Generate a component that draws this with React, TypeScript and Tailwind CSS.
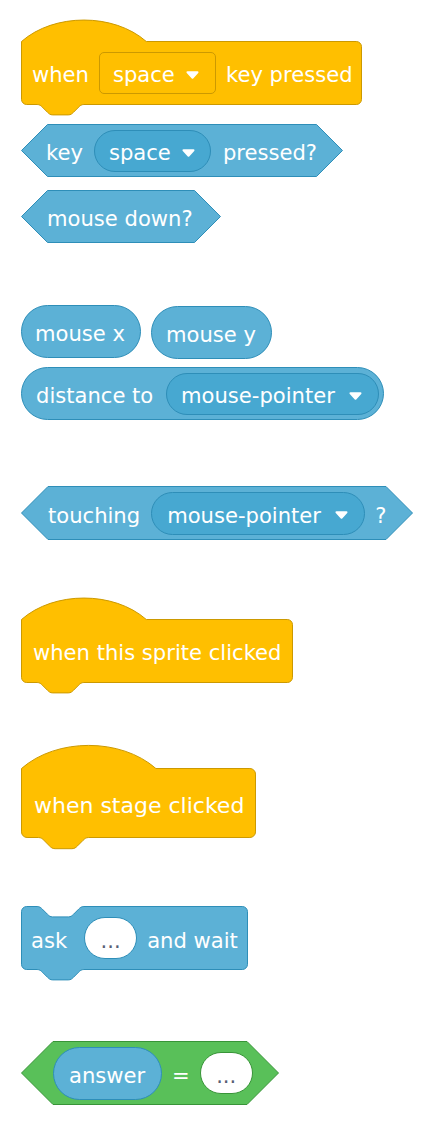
import type { ReactNode } from 'react'

const EVENTS = { fill: '#FFBF00', stroke: '#CC9900' }
const SENSING = { fill: '#5CB1D6', stroke: '#2E8EB8' }
const OPERATORS = { fill: '#59C059', stroke: '#389438' }

// bottom edge with the notch, drawn right to left
function bottomEdge(y: number, s: number) {
  return `L ${48 * s} ${y} c ${-2 * s} 0 ${-3 * s} ${s} ${-4 * s} ${2 * s} l ${-4 * s} ${4 * s} c ${-s} ${s} ${-2 * s} ${2 * s} ${-4 * s} ${2 * s} h ${-12 * s} c ${-2 * s} 0 ${-3 * s} ${-s} ${-4 * s} ${-2 * s} l ${-4 * s} ${-4 * s} c ${-s} ${-s} ${-2 * s} ${-2 * s} ${-4 * s} ${-2 * s} L ${4 * s} ${y}`
}

function hatPath(w: number, top: number, bottom: number, s: number) {
  const c = 4 * s
  return `M 0 ${top} c ${25 * s} ${-22 * s} ${71 * s} ${-22 * s} ${96 * s} 0 L ${w - c} ${top} a ${c} ${c} 0 0 1 ${c} ${c} L ${w} ${bottom - c} a ${c} ${c} 0 0 1 ${-c} ${c} ${bottomEdge(bottom, s)} a ${c} ${c} 0 0 1 ${-c} ${-c} Z`
}

function stackPath(w: number, h: number, s: number) {
  const c = 4 * s
  return `M 0 ${c} a ${c} ${c} 0 0 1 ${c} ${-c} L ${12 * s} 0 c ${2 * s} 0 ${3 * s} ${s} ${4 * s} ${2 * s} l ${4 * s} ${4 * s} c ${s} ${s} ${2 * s} ${2 * s} ${4 * s} ${2 * s} h ${12 * s} c ${2 * s} 0 ${3 * s} ${-s} ${4 * s} ${-2 * s} l ${4 * s} ${-4 * s} c ${s} ${-s} ${2 * s} ${-2 * s} ${4 * s} ${-2 * s} L ${w - c} 0 a ${c} ${c} 0 0 1 ${c} ${c} L ${w} ${h - c} a ${c} ${c} 0 0 1 ${-c} ${c} ${bottomEdge(h, s)} a ${c} ${c} 0 0 1 ${-c} ${-c} Z`
}

function boolPath(w: number, h: number) {
  const r = h / 2
  return `M ${r} 0 L ${w - r} 0 L ${w} ${r} L ${w - r} ${h} L ${r} ${h} L 0 ${r} Z`
}

// block outline, painted behind the block's content
function Shape({ d, fill, stroke }: { d: string; fill: string; stroke: string }) {
  return (
    <svg className="absolute inset-0 h-full w-full overflow-visible" aria-hidden="true">
      <path d={d} transform="translate(0.5 0.5)" fill={fill} stroke={stroke} strokeWidth={1} />
    </svg>
  )
}

function Label({ children }: { children: ReactNode }) {
  return <span className="whitespace-nowrap pt-[5px]">{children}</span>
}

function Arrow() {
  return (
    <svg width="13" height="8" viewBox="0 0 13 8" className="mt-[4px] shrink-0">
      <path d="M1.5 1.3 H11.5 L6.5 6.7 Z" fill="#fff" stroke="#fff" strokeWidth={2} strokeLinejoin="round" />
    </svg>
  )
}

function Dropdown({ label, className }: { label: string; className: string }) {
  return (
    <div
      className={`flex h-[42px] shrink-0 items-center justify-between rounded-full border border-[#2E8EB8] bg-[#47A8D1] ${className}`}
    >
      <Label>{label}</Label>
      <Arrow />
    </div>
  )
}

function WhiteInput({ className }: { className: string }) {
  return (
    <div
      className={`flex h-[42px] shrink-0 items-center justify-center rounded-full border bg-white text-[#575E75] ${className}`}
    >
      <Label>...</Label>
    </div>
  )
}

function Reporter({ children, className }: { children: ReactNode; className: string }) {
  return (
    <div
      className={`flex h-[53px] shrink-0 items-center rounded-full border border-[#2E8EB8] bg-[#5CB1D6] ${className}`}
    >
      {children}
    </div>
  )
}

export default function App() {
  return (
    <div className="flex min-h-[1129px] flex-col items-start bg-white pl-[21px] pt-[19px] font-['DejaVu_Sans',sans-serif] text-[21.1px] leading-none text-white">
      {/* when [space] key pressed */}
      <div className="relative h-[96px] w-[341px] pt-[22px]">
        <Shape d={hatPath(340, 22, 85, 1.3)} {...EVENTS} />
        <div className="relative flex h-[63px] items-center gap-[10px] pl-[11px]">
          <Label>when</Label>
          <div className="flex h-[42px] w-[117px] items-center justify-between rounded-[5px] border border-[#CC9900] bg-[#FFBF00] pl-[13px] pr-[16px]">
            <Label>space</Label>
            <Arrow />
          </div>
          <Label>key pressed</Label>
        </div>
      </div>

      {/* key (space) pressed? */}
      <div className="relative mt-[9px] h-[53px] w-[322px]">
        <Shape d={boolPath(321, 52)} {...SENSING} />
        <div className="relative flex h-full items-center gap-[10px] pl-[25px]">
          <Label>key</Label>
          <Dropdown label="space" className="ml-px mr-[2px] w-[117px] pl-[14px] pr-[15px]" />
          <Label>pressed?</Label>
        </div>
      </div>

      {/* mouse down? */}
      <div className="relative mt-[13px] h-[53px] w-[200px]">
        <Shape d={boolPath(199, 52)} {...SENSING} />
        <div className="relative flex h-full items-center pl-[26px]">
          <Label>mouse down?</Label>
        </div>
      </div>

      {/* mouse x / mouse y */}
      <div className="mt-[62px] flex items-start gap-[10px]">
        <Reporter className="w-[120px] pl-[13px]">
          <Label>mouse x</Label>
        </Reporter>
        <Reporter className="mt-px w-[121px] pl-[14px]">
          <Label>mouse y</Label>
        </Reporter>
      </div>

      {/* distance to (mouse-pointer) */}
      <Reporter className="mt-[8px] w-[363px] justify-between pl-[14px] pr-[4px]">
        <Label>distance to</Label>
        <Dropdown label="mouse-pointer" className="w-[213px] pl-[14px] pr-[16px]" />
      </Reporter>

      {/* touching (mouse-pointer) ? */}
      <div className="relative mt-[66px] h-[54px] w-[392px]">
        <Shape d={boolPath(391, 53)} {...SENSING} />
        <div className="relative flex h-full items-center gap-[10px] pl-[27px]">
          <Label>touching</Label>
          <Dropdown label="mouse-pointer" className="ml-px h-[43px] w-[214px] pl-[15px] pr-[16px]" />
          <Label>?</Label>
        </div>
      </div>

      {/* when this sprite clicked */}
      <div className="relative mt-[57px] h-[96px] w-[272px] pt-[22px]">
        <Shape d={hatPath(271, 22, 85, 1.3)} {...EVENTS} />
        <div className="relative flex h-[63px] items-center pl-[12px]">
          <Label>when this sprite clicked</Label>
        </div>
      </div>

      {/* when stage clicked */}
      <div className="relative mt-[51px] h-[105px] w-[235px] pt-[24px]">
        <Shape d={hatPath(234, 24, 93, 1.4)} {...EVENTS} />
        <div className="relative flex h-[70px] items-center pl-[13px] text-[22px]">
          <Label>when stage clicked</Label>
        </div>
      </div>

      {/* ask (...) and wait */}
      <div className="relative mt-[57px] h-[75px] w-[227px]">
        <Shape d={stackPath(226, 63, 1.3)} {...SENSING} />
        <div className="relative flex h-[64px] items-center pl-[10px]">
          <Label>ask</Label>
          <WhiteInput className="ml-[17px] mr-[10px] w-[53px] border-[#2E8EB8]" />
          <Label>and wait</Label>
        </div>
      </div>

      {/* (answer) = (...) */}
      <div className="relative mt-[60px] h-[64px] w-[258px]">
        <Shape d={boolPath(257, 63)} {...OPERATORS} />
        <div className="relative flex h-full items-center gap-[10px] pl-[32px]">
          <Reporter className="w-[109px] pl-[15px]">
            <Label>answer</Label>
          </Reporter>
          <Label>=</Label>
          <WhiteInput className="w-[53px] border-[#389438]" />
        </div>
      </div>
    </div>
  )
}
